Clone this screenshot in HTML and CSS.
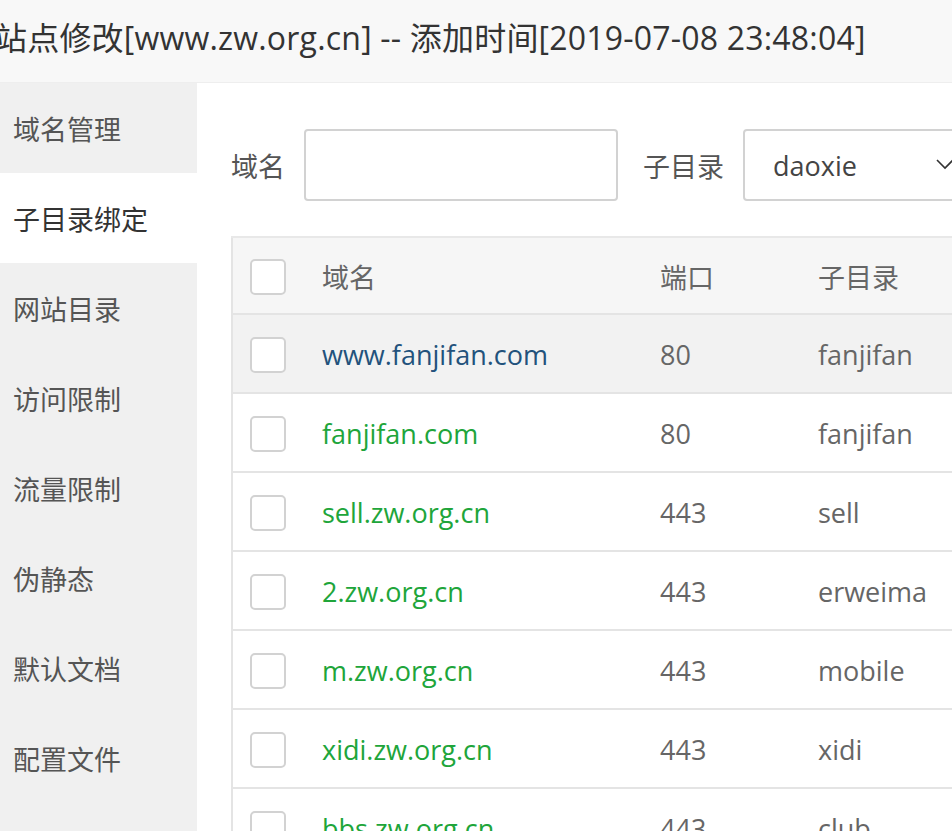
FILE: index.html
```html
<!DOCTYPE html>
<html lang="zh-CN">
<head>
    <meta charset="UTF-8">
    <title>站点修改</title>
    <link rel="stylesheet" href="styles.css">
</head>
<body>
    <div class="layer">
        <div class="layer-title">站点修改[www.zw.org.cn] -- 添加时间[2019-07-08 23:48:04]</div>
        <div class="layer-body">
            <!-- 左侧菜单 -->
            <ul class="tab-nav">
                <li>域名管理</li>
                <li class="on">子目录绑定</li>
                <li>网站目录</li>
                <li>访问限制</li>
                <li>流量限制</li>
                <li>伪静态</li>
                <li>默认文档</li>
                <li>配置文件</li>
            </ul>

            <div class="tab-con">
                <div class="form-row">
                    <span class="label">域名</span>
                    <input type="text" class="bt-input">
                    <span class="label">子目录</span>
                    <div class="bt-select">
                        <span>daoxie</span>
                        <svg class="arrow" width="18" height="12" viewBox="0 0 18 12">
                            <polyline points="1,2 9,10 17,2" fill="none" stroke="#333" stroke-width="1.6"/>
                        </svg>
                    </div>
                </div>

                <table class="sub-table">
                    <thead>
                        <tr>
                            <th class="col-chk"><span class="chk"></span></th>
                            <th class="col-domain">域名</th>
                            <th class="col-port">端口</th>
                            <th>子目录</th>
                        </tr>
                    </thead>
                    <tbody>
                        <tr class="hover">
                            <td class="col-chk"><span class="chk"></span></td>
                            <td><a class="link-hover">www.fanjifan.com</a></td>
                            <td>80</td>
                            <td>fanjifan</td>
                        </tr>
                        <tr>
                            <td class="col-chk"><span class="chk"></span></td>
                            <td><a>fanjifan.com</a></td>
                            <td>80</td>
                            <td>fanjifan</td>
                        </tr>
                        <tr>
                            <td class="col-chk"><span class="chk"></span></td>
                            <td><a>sell.zw.org.cn</a></td>
                            <td>443</td>
                            <td>sell</td>
                        </tr>
                        <tr>
                            <td class="col-chk"><span class="chk"></span></td>
                            <td><a>2.zw.org.cn</a></td>
                            <td>443</td>
                            <td>erweima</td>
                        </tr>
                        <tr>
                            <td class="col-chk"><span class="chk"></span></td>
                            <td><a>m.zw.org.cn</a></td>
                            <td>443</td>
                            <td>mobile</td>
                        </tr>
                        <tr>
                            <td class="col-chk"><span class="chk"></span></td>
                            <td><a>xidi.zw.org.cn</a></td>
                            <td>443</td>
                            <td>xidi</td>
                        </tr>
                        <tr>
                            <td class="col-chk"><span class="chk"></span></td>
                            <td><a>bbs.zw.org.cn</a></td>
                            <td>443</td>
                            <td>club</td>
                        </tr>
                    </tbody>
                </table>
            </div>
        </div>
    </div>
</body>
</html>
```

FILE: styles.css
```css
html, body {
    margin: 0;
    padding: 0;
    width: 952px;
    height: 831px;
    overflow: hidden;
    background-color: #fff;
}
body {
    font-family: "Open Sans", "Noto Sans CJK SC", sans-serif;
    color: #333;
}
.layer {
    width: 1100px;
}
.layer-title {
    height: 82px;
    line-height: 76px;
    font-size: 32px;
    letter-spacing: 0.2px;
    color: #333;
    background-color: #f8f8f8;
    border-bottom: 1px solid #eee;
    text-indent: -5px;
    white-space: nowrap;
    overflow: hidden;
}
.layer-body {
    display: flex;
}
.tab-nav {
    list-style: none;
    margin: 0;
    padding: 0;
    width: 197px;
    flex-shrink: 0;
    background-color: #f0f0f0;
    min-height: 760px;
}
.tab-nav li {
    height: 90px;
    box-sizing: border-box;
    padding-top: 4px;
    line-height: 86px;
    padding-left: 13px;
    font-size: 27px;
    color: #555;
}
.tab-nav li.on {
    background-color: #fff;
    color: #333;
}
.tab-con {
    flex: 1;
    padding: 46px 0 0 34px;
}
.form-row {
    display: flex;
    align-items: center;
    height: 72px;
}
.label {
    font-size: 27px;
    color: #555;
}
.bt-input {
    width: 314px;
    height: 72px;
    box-sizing: border-box;
    margin: 0 25px 0 19px;
    border: 2px solid #d2d2d2;
    border-radius: 4px;
    outline: none;
}
.bt-select {
    display: flex;
    align-items: center;
    width: 240px;
    height: 72px;
    box-sizing: border-box;
    margin-left: 19px;
    padding: 0 0 0 28px;
    border: 2px solid #d2d2d2;
    border-radius: 4px;
    font-size: 27px;
    color: #444;
    flex-shrink: 0;
}
.bt-select .arrow {
    margin-left: auto;
    margin-right: 27px;
    margin-top: -2px;
}
.sub-table {
    margin-top: 35px;
    width: 820px;
    border-collapse: collapse;
    border-left: 2px solid #e4e4e4;
    border-top: 2px solid #e8e8e8;
    font-size: 27px;
}
.sub-table th, .sub-table td {
    height: 75px;
    padding: 2px 0 0 0;
    text-align: left;
    font-weight: normal;
    color: #666;
    border-bottom: 2px solid #e4e4e4;
    vertical-align: middle;
}
.sub-table th {
    height: 73px;
}
.sub-table thead tr {
    background-color: #f6f6f6;
}
.sub-table tr.hover {
    background-color: #f2f2f2;
}
.col-chk {
    width: 90px;
    padding-left: 17px !important;
    box-sizing: border-box;
}
.col-domain {
    width: 338px;
}
.col-port {
    width: 158px;
}
.chk {
    display: block;
    width: 36px;
    height: 36px;
    box-sizing: border-box;
    border: 2px solid #d2d2d2;
    border-radius: 5px;
    background-color: #fff;
}
.sub-table a {
    color: #20a53a;
    text-decoration: none;
}
.sub-table a.link-hover {
    color: #23527c;
}
```
